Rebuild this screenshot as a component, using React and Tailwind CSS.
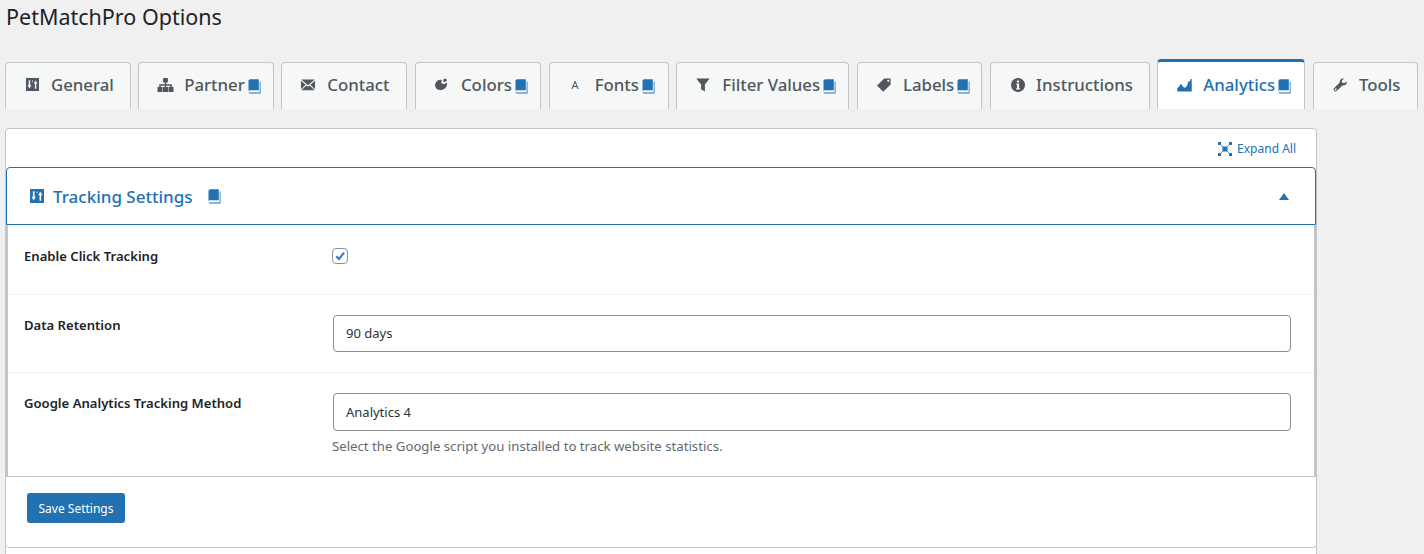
import React from "react";

const Book = ({ className = "" }) => (
  <svg viewBox="0 0 13 15" className={className} aria-hidden="true">
    <path d="M.5 2C.5.9 1.300.2 2.300.2H10.800V11.200H2.300C1.300 11.200.5 11.600.5 12.200z" fill="currentColor" />
    <path d="M.5 12.400C.5 13.600 1.400 14.500 2.500 14.500H12.500V2.500H11.700V13.600H2.500C1.500 13.600.9 13.100.5 12.400z" fill="currentColor" />
  </svg>
);

const Sliders = ({ className = "" }) => (
  <svg viewBox="0 0 12 12" className={className} aria-hidden="true">
    <path fillRule="evenodd" fill="currentColor" d="M0 0h12v12H0zM2.500 2v4.600H1.300L3.200 9.800l1.800-3.200H3.900V2zM8.200 10V5.400H7l1.800-3.200 1.900 3.200H9.500V10zM5.600 2.400h.9v1h-.9z" />
  </svg>
);
const Sitemap = ({ className = "" }) => (
  <svg viewBox="0 0 16 14" className={className} aria-hidden="true">
    <path fill="currentColor" d="M5.600 0h4.800v4.400H8.700V6.200h5.600V9H16v5h-5V9h1.700V7.700H8.700V9H10.500v5h-5V9h1.800V7.700H3.300V9H5v5H0V9h1.700V6.200h5.600V4.400H5.600z" />
  </svg>
);
const Mail = ({ className = "" }) => (
  <svg viewBox="0 0 14 12" className={className} aria-hidden="true">
    <path fill="currentColor" d="M0.300.5h13.400L7 6.300zM0 1.700 4.600 5.700 0 10.200zM14 1.700 9.400 5.700 14 10.200zM5.400 6.400 7 7.800l1.600-1.400 5 4.800H.4z" />
  </svg>
);
const Palette = ({ className = "" }) => (
  <svg viewBox="0 0 14 14" className={className} aria-hidden="true">
    <path fill="currentColor" d="M6.200 1.800c.7-.1 1.400 0 1.900.2-.8.800-1.200 2-.6 3 .6 1 1.800 1.300 2.900.9.900-.3 1.600-1 2.300-1.300.5 1.300.4 2.800-.3 4-1.300 2.400-3.900 4-6.500 3.500C2.800 11.700.8 9.300 1.100 6.500 1.400 4 3.600 2.100 6.200 1.800z" />
    <path fill="currentColor" d="M10.200.5c1.200 0 2.500.8 3 1.800-.8.500-1.700 1.900-2.800 1.800-.9 0-1.300-.7-1.100-1.500.1-.7.400-1.500.9-2.100z" />
  </svg>
);
const Filter = ({ className = "" }) => (
  <svg viewBox="0 0 14 14" className={className} aria-hidden="true">
    <path fill="currentColor" d="M.3.500h13.400L8.900 6.500V13.500L5.100 11.200V6.500z" />
  </svg>
);
const Tag = ({ className = "" }) => (
  <svg viewBox="0 0 14 14" className={className} aria-hidden="true">
    <path fill="currentColor" fillRule="evenodd" d="M7.300.4h6.300v6.200L6.200 13.800 0 7.600zM11.300 1.700a1.100 1.100 0 1 0 .01 0z" />
  </svg>
);
const Info = ({ className = "" }) => (
  <svg viewBox="0 0 14 14" className={className} aria-hidden="true">
    <path fill="currentColor" fillRule="evenodd" d="M7 0a7 7 0 1 0 .01 0zM5.900 2.400h2.200v2H5.900zM5.400 5.600h2.700v4.700h.8v1.300H5.100v-1.300h.9V6.900h-.6z" />
  </svg>
);
const Chart = ({ className = "" }) => (
  <svg viewBox="0 0 16 14" className={className} aria-hidden="true">
    <path fill="currentColor" d="M.3 14V10.500L2.600 8.400 3.400 6.300H5L6 8.500 8.600 10.300 11 7.300 12 3.300 14 3 14.300 .5H15.700V14z" />
  </svg>
);
const Wrench = ({ className = "" }) => (
  <svg viewBox="0 0 14 14" className={className} aria-hidden="true">
    <path fill="currentColor" fillRule="evenodd" d="M13.600 3.400c.4 1.400-.1 2.900-1.400 3.600-.8.4-1.700.5-2.500.2L4 12.800c-.8.800-2 .8-2.800 0s-.8-2 0-2.800l5.600-5.500C6.500 3.700 6.700 2.800 7.200 2 8 .8 9.600.200 11 .6L8.800 2.800l.5 2 2 .5zM2.700 10.600a.9.9 0 1 0 .01 0z" />
  </svg>
);
const ExpandIcon = ({ className = "" }) => (
  <svg viewBox="0 0 14 14" className={className} aria-hidden="true">
    <path fill="currentColor" d="M0 0h3v3H0zM11 0h3v3h-3zM0 11h3v3H0zM11 11h3v3h-3zM4.500 4.500h5v5h-5z" />
    <path stroke="currentColor" strokeWidth="0.800" d="M3 3l2 2M11 3 9 5M3 11l2-2M11 11 9 9" />
  </svg>
);

const Letter = ({ className = "" }) => (
  <span className={"text-[11px] font-normal leading-none text-[#50575e] " + className}>A</span>
);

const tabs = [
  { label: "General", Icon: Sliders, w: "w-[125.500px]", ic: "w-[13px] h-[13px] ml-[1px]", book: false },
  { label: "Partner", Icon: Sitemap, w: "w-[135.500px]", ic: "w-[17px] h-[14px] ml-[-1px]", book: true },
  { label: "Contact", Icon: Mail, w: "w-[126px]", ic: "w-[14px] h-[12px]", book: false },
  { label: "Colors", Icon: Palette, w: "w-[126px]", ic: "w-[14px] h-[14px] ml-[-1px]", book: true },
  { label: "Fonts", Icon: Letter, w: "w-[120px]", ic: "w-[9px] ml-[2px] text-center", book: true },
  { label: "Filter Values", Icon: Filter, w: "w-[173px]", ic: "w-[14px] h-[14px]", book: true },
  { label: "Labels", Icon: Tag, w: "w-[125.500px]", ic: "w-[14px] h-[14px]", book: true },
  { label: "Instructions", Icon: Info, w: "w-[159.500px]", ic: "w-[14px] h-[14px] ml-[1px]", book: false },
  { label: "Analytics", Icon: Chart, w: "w-[148px]", ic: "w-[15px] h-[14px]", book: true, active: true },
  { label: "Tools", Icon: Wrench, w: "w-[105px]", ic: "w-[14px] h-[14px]", book: false },
];

const Tab = ({ t }) => (
  <div
    className={
      "flex items-center rounded-t-[4px] border border-b-0 pl-[19px] text-[16.800px] font-medium shrink-0 " +
      t.w + " " +
      (t.active
        ? "h-[50px] pb-[2px] bg-white border-[#c3c4c7] border-t-[3px] border-t-[#2271b1] text-[#2271b1]"
        : "h-[47px] pb-[3px] bg-[#f6f7f7] border-[#c3c4c7] text-[#50575e]")
    }
  >
    <span className="w-[26px] shrink-0 flex items-center">
      <t.Icon className={t.ic + " shrink-0"} />
    </span>
    <span className="flex items-center">
      {t.label}
      {t.book && <Book className="w-[13px] h-[15px] ml-[3px] mt-[3px] text-[#2271b1] shrink-0" />}
    </span>
  </div>
);

const Row = ({ label, children, className }) => (
  <div className={"flex border-b border-[#f0f0f1] " + className}>
    <div className="w-[325px] pl-[16px] text-[13.100px] font-semibold text-[#1d2327] leading-[18px] shrink-0">{label}</div>
    <div className="flex-1 pr-[23px]">{children}</div>
  </div>
);

const Field = ({ children, className = "" }) => (
  <div className={"rounded-[4px] border border-[#8c8f94] bg-white pl-[12px] flex items-center text-[13px] text-[#2c3338] " + className}>
    {children}
  </div>
);

export default function App() {
  return (
    <div className="h-[554px] overflow-hidden bg-[#f0f0f1] font-['Noto_Sans','Open_Sans',sans-serif]">
      <h1 className="pl-[6px] pt-[2px] text-[21.500px] leading-[30px] font-normal text-[#1d2327]">PetMatchPro Options</h1>
      <div className="mt-[27px] pl-[5px] h-[50px] flex items-end gap-[7.670px]">
        {tabs.map((t) => (
          <Tab key={t.label} t={t} />
        ))}
      </div>
      <div className="mt-[19px] ml-[5px] w-[1312px] h-[600px] rounded-t-[4px] border border-[#c3c4c7] bg-white">
        <div className="h-[38px] flex items-center justify-end pt-[2px] pr-[20px] gap-[5px] text-[12px] text-[#2271b1]">
          <ExpandIcon className="w-[14px] h-[14px]" />
          <span>Expand All</span>
        </div>
        <div className="w-[1311px] h-[381px] rounded-b-[4px] border-b border-r border-[#c3c4c7]">
          <div className="h-[58px] rounded-t-[4px] border border-[#2271b1] flex items-center pl-[23px] pr-[26px] text-[#2271b1]">
            <Sliders className="w-[14px] h-[14px]" />
            <span className="ml-[9px] pt-[2px] text-[17px] font-medium">Tracking Settings</span>
            <Book className="w-[13px] h-[15px] ml-[15px]" />
            <div className="ml-auto w-0 h-0 border-x-[5px] border-x-transparent border-b-[7px] border-b-[#2271b1]" />
          </div>
          <div className="border-l-[2px] border-r-[2px] border-[#c3c4c7]">
            <Row label="Enable Click Tracking" className="h-[70px] items-start pt-[22px]">
              <div className="ml-[-1px] w-[16px] h-[16px] rounded-[4px] border border-[#8c8f94] bg-white flex items-center justify-center text-[#3582c4] mt-[1px]">
                <svg viewBox="0 0 12 12" className="w-[12px] h-[12px]" aria-hidden="true">
                  <path d="M2.200 6.200 5 9l5-6.400" fill="none" stroke="currentColor" strokeWidth="2.200" />
                </svg>
              </div>
            </Row>
            <Row label="Data Retention" className="h-[78px] items-start pt-[20px] [&>div:first-child]:pt-[1px]">
              <Field className="h-[37px] pt-[1px]">90 days</Field>
            </Row>
            <div className="flex h-[103px] pt-[20px]">
              <div className="w-[325px] pl-[16px] text-[13.100px] font-semibold text-[#1d2327] leading-[18px] shrink-0 pt-[1px]">Google Analytics Tracking Method</div>
              <div className="flex-1 pr-[23px]">
                <Field className="h-[38px] pt-[1px]">Analytics 4</Field>
                <p className="mt-[6px] ml-[-1px] text-[13.200px] leading-[18px] text-[#646970]">Select the Google script you installed to track website statistics.</p>
              </div>
            </div>
          </div>
          <div className="border-t border-[#c3c4c7] pl-[21px] pt-[16px]">
            <button className="h-[30px] w-[98px] pt-[1px] rounded-[3px] bg-[#2271b1] text-white text-[12px]">Save Settings</button>
          </div>
        </div>
      </div>
    </div>
  );
}
